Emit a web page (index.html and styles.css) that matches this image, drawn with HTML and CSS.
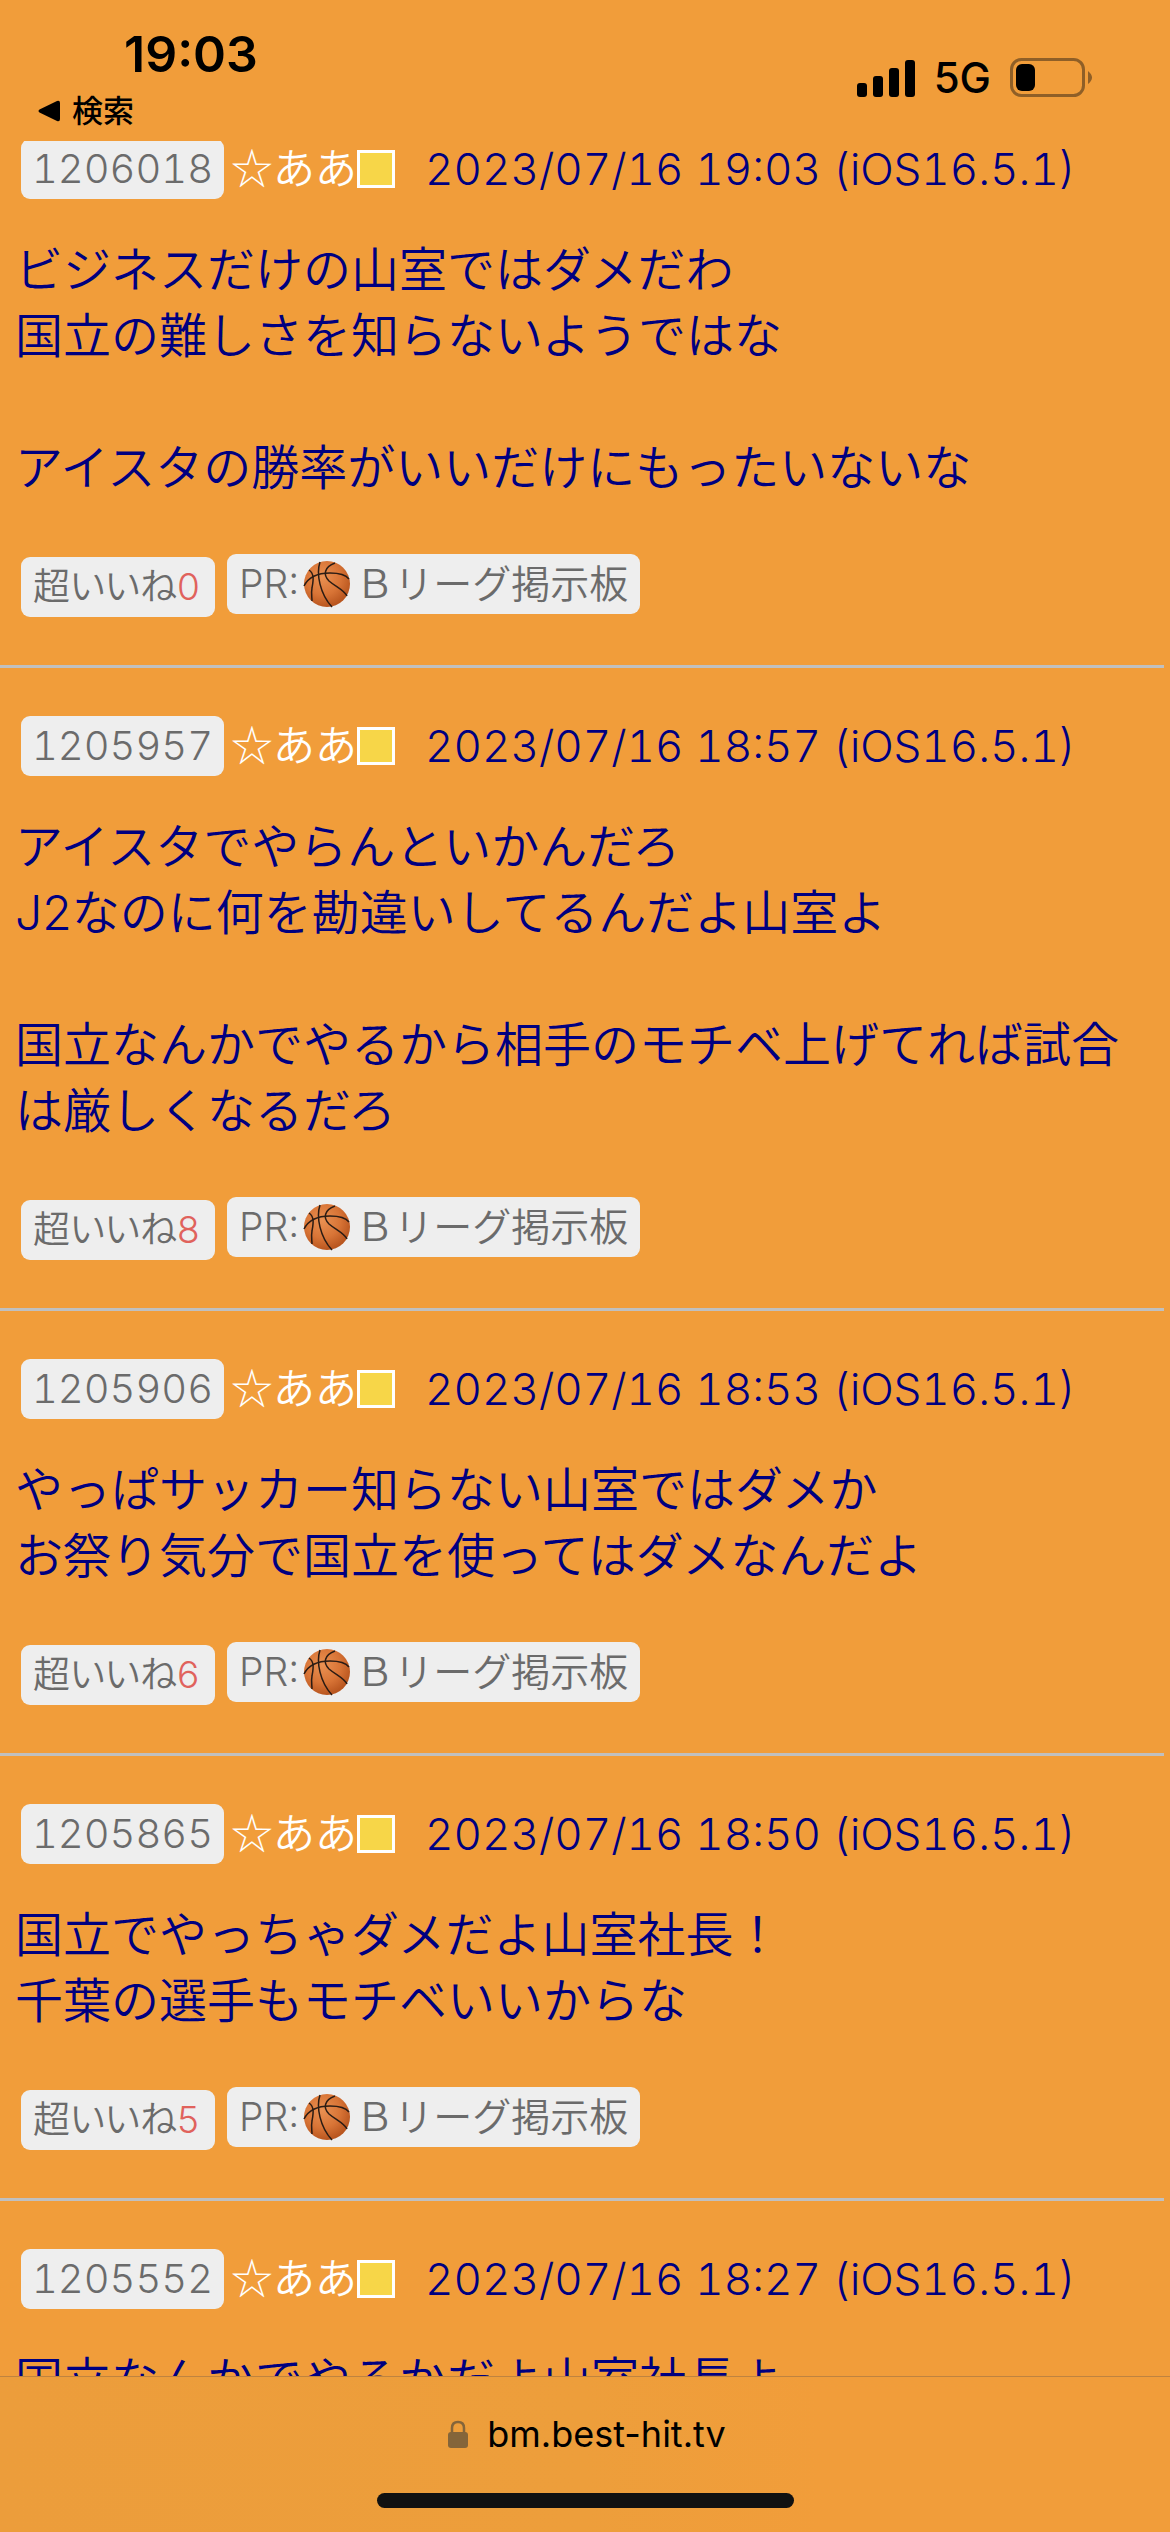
FILE: index.html
```html
<!DOCTYPE html>
<html lang="ja">
<head>
    <meta charset="UTF-8">
    <meta name="viewport" content="width=device-width, initial-scale=1.0">
    <title>掲示板</title>
    <link rel="stylesheet" href="styles.css">
</head>
<body>
    <svg class="defs" aria-hidden="true">
        <defs>
            <radialGradient id="ballcolor" cx="40%" cy="35%" r="65%">
                <stop offset="0" stop-color="#ea9152"/>
                <stop offset="0.6" stop-color="#d87436"/>
                <stop offset="1" stop-color="#b9561f"/>
            </radialGradient>
        </defs>
        <symbol id="ball" viewBox="0 0 48 48">
            <circle cx="24" cy="24" r="23" fill="url(#ballcolor)"/>
            <g fill="none" stroke="#2b1c14" stroke-width="1.5">
                <path d="M1 26C6 16 16 13 27 13C36 13 43 15 46 19"/>
                <path d="M17 2C13 14 17 34 29 47"/>
                <path d="M32 3C21 7 20 15 26 21C33 27 41 30 44 36"/>
                <path d="M6 10C12 14 10 22 9 28C8 33 9 37 9 41"/>
            </g>
        </symbol>
    </svg>

    <header class="statusbar">
        <div class="left">
            <div class="time">19:03</div>
            <a class="back" href="#">
                <svg width="22" height="22" viewBox="0 0 22 22"><path d="M1.500 9.500L19 1Q22 0 22 3V19Q22 22 19 21L1.500 12.500Q-.500 11 1.500 9.500Z"/></svg>
                検索
            </a>
        </div>
        <div class="right">
            <svg width="58" height="38" viewBox="0 0 58 38">
                <rect x="0" y="24" width="10" height="14" rx="3"/>
                <rect x="16" y="17" width="10" height="21" rx="3"/>
                <rect x="32" y="9" width="10" height="29" rx="3"/>
                <rect x="48" y="1" width="10" height="37" rx="3"/>
            </svg>
            <span class="net">5G</span>
            <svg width="83" height="40" viewBox="0 0 83 40">
                <rect x="1.500" y="1.500" width="72" height="36" rx="10" fill="none" stroke="#8f5f27" stroke-width="3"/>
                <rect x="6" y="6" width="19" height="27" rx="6"/>
                <path d="M78 13Q86 19.500 78 26Z" fill="#8f5f27"/>
            </svg>
        </div>
    </header>

    <main class="board">
        <article class="post">
            <div class="info">
                <a class="badge num" href="#">1206018</a>
                <span class="name">☆ああ</span><span class="card"></span>
                <time class="date">2023/07/16 19:03 (iOS16.5.1)</time>
            </div>
            <p class="text">ビジネスだけの山室ではダメだわ<br>国立の難しさを知らないようではな<br><br>アイスタの勝率がいいだけにもったいないな</p>
            <div class="tools">
                <button class="badge like" type="button">超いいね<span class="count">0</span></button>
                <a class="badge pr" href="#">PR:<svg class="ball"><use href="#ball"/></svg>Ｂリーグ掲示板</a>
            </div>
        </article>

        <article class="post">
            <div class="info">
                <a class="badge num" href="#">1205957</a>
                <span class="name">☆ああ</span><span class="card"></span>
                <time class="date">2023/07/16 18:57 (iOS16.5.1)</time>
            </div>
            <p class="text">アイスタでやらんといかんだろ<br>J2なのに何を勘違いしてるんだよ山室よ<br><br>国立なんかでやるから相手のモチベ上げてれば試合は厳しくなるだろ</p>
            <div class="tools">
                <button class="badge like" type="button">超いいね<span class="count">8</span></button>
                <a class="badge pr" href="#">PR:<svg class="ball"><use href="#ball"/></svg>Ｂリーグ掲示板</a>
            </div>
        </article>

        <article class="post">
            <div class="info">
                <a class="badge num" href="#">1205906</a>
                <span class="name">☆ああ</span><span class="card"></span>
                <time class="date">2023/07/16 18:53 (iOS16.5.1)</time>
            </div>
            <p class="text">やっぱサッカー知らない山室ではダメか<br>お祭り気分で国立を使ってはダメなんだよ</p>
            <div class="tools">
                <button class="badge like" type="button">超いいね<span class="count">6</span></button>
                <a class="badge pr" href="#">PR:<svg class="ball"><use href="#ball"/></svg>Ｂリーグ掲示板</a>
            </div>
        </article>

        <article class="post">
            <div class="info">
                <a class="badge num" href="#">1205865</a>
                <span class="name">☆ああ</span><span class="card"></span>
                <time class="date">2023/07/16 18:50 (iOS16.5.1)</time>
            </div>
            <p class="text">国立でやっちゃダメだよ山室社長！<br>千葉の選手もモチベいいからな</p>
            <div class="tools">
                <button class="badge like" type="button">超いいね<span class="count">5</span></button>
                <a class="badge pr" href="#">PR:<svg class="ball"><use href="#ball"/></svg>Ｂリーグ掲示板</a>
            </div>
        </article>

        <article class="post">
            <div class="info">
                <a class="badge num" href="#">1205552</a>
                <span class="name">☆ああ</span><span class="card"></span>
                <time class="date">2023/07/16 18:27 (iOS16.5.1)</time>
            </div>
            <p class="text">国立なんかでやるかだよ山室社長よ</p>
        </article>
    </main>

    <footer class="urlbar">
        <div class="url">
            <svg width="20" height="28" viewBox="0 0 20 28">
                <rect x="0" y="12" width="20" height="16" rx="3" fill="#84653a"/>
                <path d="M4 13V8Q4 2 10 2Q16 2 16 8V13" fill="none" stroke="#84653a" stroke-width="2.500"/>
            </svg>
            <span>bm.best-hit.tv</span>
        </div>
        <div class="home"></div>
    </footer>
</body>
</html>
```

FILE: styles.css
```css
*{
    box-sizing: border-box;
}
body{
    margin: 0;
    height: 100vh;
    display: flex;
    flex-direction: column;
    overflow: hidden;
    background-color: #f19d3a;
    font-family: Inter, "Noto Sans CJK JP", sans-serif;
    font-weight: 350;
}
a{
    color: inherit;
    text-decoration: none;
}
.defs{
    position: absolute;
    width: 0;
    height: 0;
}
/* status bar */
.statusbar{
    flex: none;
    height: 141px;
    display: flex;
    justify-content: space-between;
    color: #000;
}
.left{
    padding: 24px 0 0 38px;
}
.time{
    padding-left: 86px;
    font-size: 50px;
    font-weight: 600;
    line-height: 60px;
}
.back{
    display: flex;
    align-items: center;
    gap: 12px;
    margin-top: 12px;
    font-size: 31px;
    font-weight: 500;
    line-height: 30px;
}
.right{
    display: flex;
    align-items: center;
    height: 40px;
    margin: 58px 77px 0 0;
}
.net{
    margin: 0 19px 0 19px;
    font-size: 42px;
    font-weight: 450;
    line-height: 40px;
}
/* posts */
.board{
    flex: 1;
    min-height: 0;
    overflow: hidden;
    padding-right: 6px;
}
.post{
    padding: 48px 15px;
    border-top: 3px solid #c0c0c0;
    color: #000080;
}
.post:first-child{
    margin-top: -2px;
    padding-top: 0;
    border-top: 0;
}
.info{
    display: flex;
    align-items: center;
    height: 60px;
    padding-left: 6px;
    font-variant-numeric: tabular-nums;
}
.badge{
    display: flex;
    align-items: center;
    height: 60px;
    padding: 0 12px;
    border: 0;
    border-radius: 9px;
    background-color: #eee;
    color: #6b6b6b;
    font-family: inherit;
    font-size: 39px;
    font-weight: 350;
    line-height: 60px;
    white-space: nowrap;
}
.num{
    width: 203px;
    justify-content: center;
    font-size: 40px;
}
.name{
    margin-left: 7px;
    padding-bottom: 6px;
    color: #fff;
    font-family: "Noto Sans CJK JP", sans-serif;
    font-size: 42px;
    line-height: 54px;
}
.card{
    width: 38px;
    height: 38px;
    margin-right: 30px;
    border: 3px solid #fff;
    background-color: #f7d648;
}
.date{
    font-size: 44px;
    line-height: 60px;
    white-space: nowrap;
}
.text{
    margin: 38px 0 53px;
    font-size: 48px;
    line-height: 66px;
}
.tools{
    display: flex;
    gap: 12px;
    padding-left: 6px;
}
.like{
    width: 194px;
    margin-top: 3px;
    font-size: 37px;
    font-feature-settings: "palt";
}
.count{
    color: #e0625c;
}
.ball{
    width: 48px;
    height: 48px;
    margin: 0 4px;
}
/* bottom bar */
.urlbar{
    flex: none;
    height: 156px;
    display: flex;
    flex-direction: column;
    align-items: center;
    border-top: 1px solid #bf8340;
    background: linear-gradient(90deg, #ec9d3b, #ed9e3b 50%, #f19d3a 70%);
    color: #000;
}
.url{
    display: flex;
    align-items: center;
    gap: 19px;
    margin-top: 35px;
    padding-left: 4px;
    font-size: 36px;
    font-weight: 400;
    line-height: 44px;
}
.home{
    width: 417px;
    height: 15px;
    margin-top: 37px;
    border-radius: 8px;
    background-color: #111;
}
```
